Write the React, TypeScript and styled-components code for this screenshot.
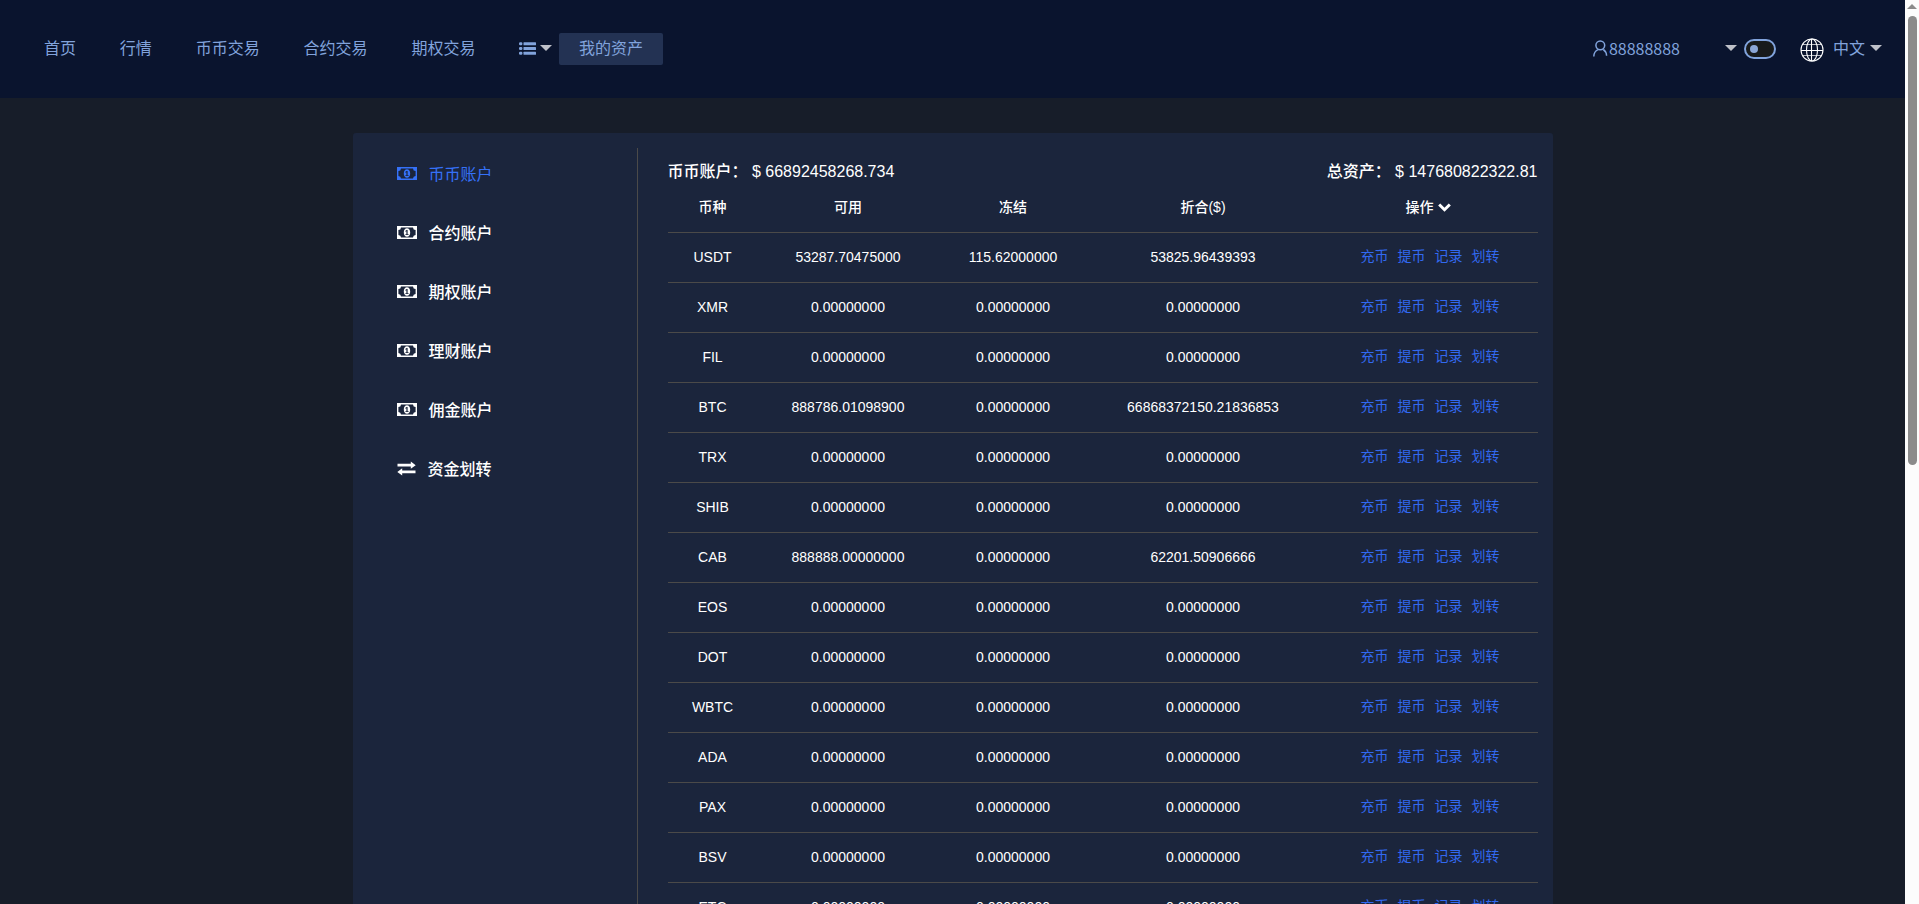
import React from 'react';
import styled, { createGlobalStyle } from 'styled-components';

const GlobalStyle = createGlobalStyle`
  * { box-sizing: border-box; }
  html, body { margin: 0; padding: 0; overflow: hidden; background: #181d29; }
  body { font-family: 'Liberation Sans', 'Noto Sans CJK SC', sans-serif; font-size: 16px; color: #fff; }
`;

const Screen = styled.div`
  display: flex;
  height: 904px;
  overflow: hidden;
`;

const Page = styled.div`
  flex: 1;
  height: 904px;
  overflow: hidden;
  display: flex;
  flex-direction: column;
  background: #171d29;
`;

const Header = styled.header`
  flex: none;
  display: flex;
  align-items: center;
  height: 98px;
  padding: 0 23px 0 22px;
  background: #0a142e;
  color: #81a3dc;
`;

const NavItem = styled.a`
  padding: 0 21.95px;
  line-height: 32px;
`;

const NavMenu = styled.div`
  display: flex;
  align-items: center;
  gap: 4px;
  padding-left: 22px;
  width: 61.5px;
  height: 32px;
  padding-bottom: 1px;
`;

const AssetsButton = styled.a`
  width: 104px;
  height: 32px;
  line-height: 32px;
  text-align: center;
  background: #233253;
  border-radius: 2px;
`;

const Caret = styled.span<{ $left?: number }>`
  flex: none;
  margin-left: ${(p) => p.$left ?? 0}px;
  margin-bottom: 2px;
  border: 6px solid transparent;
  border-top-color: #bfc1c9;
  border-bottom: 0;
`;

const Spacer = styled.div`
  flex: 1;
`;

const User = styled.div`
  display: flex;
  align-items: center;
  gap: 1px;
  line-height: 24px;
  padding-bottom: 2px;
  font-family: 'Noto Sans CJK SC', sans-serif;
`;

const Toggle = styled.div`
  width: 32px;
  height: 20px;
  margin-left: 7px;
  border: 2px solid #81a3dc;
  border-radius: 10px;
  background: #181a1b;
  display: flex;
  align-items: center;
  padding-left: 4px;
`;

const Knob = styled.i`
  width: 8px;
  height: 8px;
  border-radius: 50%;
  background: #8ba6d6;
`;

const Globe = styled.svg`
  margin: 2px 9px 0 24px;
`;

const Language = styled.span`
  line-height: 32px;
`;

const Panel = styled.main`
  flex: none;
  align-self: center;
  display: flex;
  width: 1200px;
  height: 1400px;
  margin-top: 35px;
  padding: 15px;
  background: #1b253c;
  border-radius: 3px;
`;

const Sidebar = styled.nav`
  width: 270px;
  border-right: 1px solid #4b4a49;
  padding-left: 29px;
`;

const SideItem = styled.a<{ $active?: boolean }>`
  display: flex;
  align-items: center;
  gap: 12px;
  height: 59px;
  padding-bottom: 9px;
  font-weight: ${(p) => (p.$active ? 400 : 500)};
  color: ${(p) => (p.$active ? '#3571f8' : '#fff')};
  svg { flex: none; }
`;

const Content = styled.section`
  flex: 1;
  padding-left: 30px;
`;

const Summary = styled.div`
  display: flex;
  justify-content: space-between;
  padding-top: 12px;
  height: 35px;
  line-height: 24px;
  font-weight: 500;
`;

const Row = styled.div<{ $head?: boolean }>`
  display: grid;
  grid-template-columns: 90px 181px 149px 231px 219px;
  align-items: center;
  text-align: center;
  height: 50px;
  font-size: 14px;
  line-height: 20px;
  font-weight: ${(p) => (p.$head ? 500 : 400)};
  padding-bottom: 1px;
  border-bottom: 1px solid #4b4a49;
`;

const HeadAction = styled.span`
  display: flex;
  justify-content: center;
  align-items: center;
  gap: 4px;
`;

const Actions = styled.span`
  display: flex;
  justify-content: center;
  gap: 9px;
  color: #3269f0;
  padding: 0 0 2px 4px;
`;

const Scrollbar = styled.div`
  width: 14px;
  background: #fcfcfc;
  display: flex;
  flex-direction: column;
  align-items: center;
`;

const ScrollUp = styled.i`
  margin: 4px 0 7px;
  border: 5px solid transparent;
  border-top: 0;
  border-bottom-color: #8b8b8b;
`;

const Thumb = styled.div`
  width: 9px;
  height: 449px;
  border-radius: 5px;
  background: #8b8b8b;
`;

const Bill = () => (
  <svg width="20" height="13" viewBox="0 0 20 13" fill="currentColor">
    <path fillRule="evenodd" d="M0 0h20v13H0zM4 1.500A2.700 2.700 0 0 1 1.400 4.100v4.800A2.700 2.700 0 0 1 4 11.500h12a2.700 2.700 0 0 1 2.600-2.600V4.100A2.700 2.700 0 0 1 16 1.500z" />
    <path fillRule="evenodd" d="M10 2.200c2 0 3.200 1.900 3.200 4.300s-1.200 4.300-3.200 4.300-3.200-1.900-3.200-4.300S8 2.200 10 2.200zM9.600 3.900 8.200 5l.5.7.7-.5v3H8.400V9h3.200v-.8h-1V3.900z" />
  </svg>
);

const Transfer = () => (
  <svg width="19" height="15" viewBox="0 0 19 15" fill="currentColor">
    <path d="M.5 2.700h13.300V.6L18.700 4.200l-4.900 3.600V5.600H.5zM18.500 9.500H5.200V7.300L.3 10.900l4.900 3.600v-2.200h13.300z" />
  </svg>
);

const ListIcon = () => (
  <svg width="17" height="13" viewBox="0 0 17 13" fill="currentColor">
    {[0.2, 5, 9.8].map((y) => (
      <g key={y}>
        <rect x="0" y={y} width="3.400" height="3" rx="1.200" />
        <rect x="4.500" y={y} width="12.500" height="3" rx=".5" />
      </g>
    ))}
  </svg>
);

const navItems = ['首页', '行情', '币币交易', '合约交易', '期权交易'];
const accounts = ['币币账户', '合约账户', '期权账户', '理财账户', '佣金账户'];
const actions = ['充币', '提币', '记录', '划转'];
const zero = '0.00000000';
const rows = [
  ['USDT', '53287.70475000', '115.62000000', '53825.96439393'],
  ['XMR', zero, zero, zero],
  ['FIL', zero, zero, zero],
  ['BTC', '888786.01098900', zero, '66868372150.21836853'],
  ['TRX', zero, zero, zero],
  ['SHIB', zero, zero, zero],
  ['CAB', '888888.00000000', zero, '62201.50906666'],
  ['EOS', zero, zero, zero],
  ['DOT', zero, zero, zero],
  ['WBTC', zero, zero, zero],
  ['ADA', zero, zero, zero],
  ['PAX', zero, zero, zero],
  ['BSV', zero, zero, zero],
  ['ETC', zero, zero, zero],
];

export default function App() {
  return (
    <Screen>
      <GlobalStyle />
      <Page>
        <Header>
          {navItems.map((t) => <NavItem key={t}>{t}</NavItem>)}
          <NavMenu><ListIcon /><Caret /></NavMenu>
          <AssetsButton>我的资产</AssetsButton>
          <Spacer />
          <User>
            <svg width="15" height="17" viewBox="0 0 15 17" fill="none" stroke="currentColor" strokeWidth="1.500">
              <circle cx="7.300" cy="5.300" r="4.400" />
              <path d="M.8 16.500c.1-3.600 1.700-5.800 4.200-6.900M13.600 15.700c-.2-2.700-1.300-4.900-3.300-6.200" />
            </svg>
            88888888
          </User>
          <Caret $left={45} />
          <Toggle><Knob /></Toggle>
          <Globe width="24" height="24" viewBox="0 0 24 24" fill="none" stroke="#fff" strokeWidth="1.100">
            <circle cx="12" cy="12" r="11" />
            <ellipse cx="12" cy="12" rx="5.500" ry="11" />
            <path d="M11.500 1v22M1 12.500h22" />
            <path d="M3 6.500h18M3 17.500h18" opacity=".7" />
          </Globe>
          <Language>中文</Language>
          <Caret $left={5} />
        </Header>
        <Panel>
          <Sidebar>
            {accounts.map((t, i) => (
              <SideItem key={t} $active={i === 0}><Bill />{t}</SideItem>
            ))}
            <SideItem><Transfer />资金划转</SideItem>
          </Sidebar>
          <Content>
            <Summary>
              <span>币币账户： $ 66892458268.734</span>
              <span>总资产： $ 147680822322.81</span>
            </Summary>
            <Row $head>
              <span>币种</span><span>可用</span><span>冻结</span><span>折合($)</span>
              <HeadAction>
                操作
                <svg width="13" height="9" viewBox="0 0 13 9" fill="none" stroke="#fff" strokeWidth="3"><path d="M1.200 1.500 6.500 6.700l5.300-5.200" /></svg>
              </HeadAction>
            </Row>
            {rows.map((r) => (
              <Row key={r[0]}>
                {r.map((c, i) => <span key={i}>{c}</span>)}
                <Actions>{actions.map((a) => <span key={a}>{a}</span>)}</Actions>
              </Row>
            ))}
          </Content>
        </Panel>
      </Page>
      <Scrollbar><ScrollUp /><Thumb /></Scrollbar>
    </Screen>
  );
}
